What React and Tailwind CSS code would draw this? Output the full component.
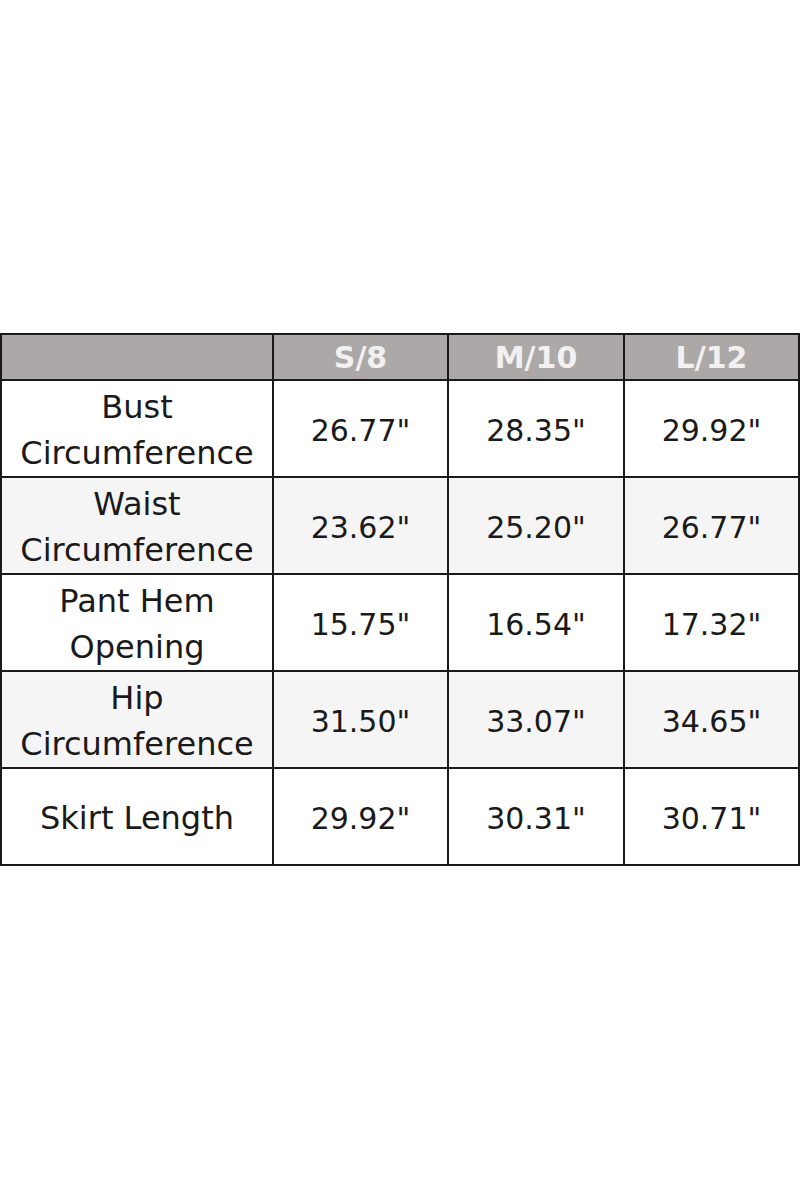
import React from 'react';

const sizes = ["S/8", "M/10", "L/12"];

const rows = [
  { label: ["Bust", "Circumference"], values: ['26.77"', '28.35"', '29.92"'] },
  { label: ["Waist", "Circumference"], values: ['23.62"', '25.20"', '26.77"'] },
  { label: ["Pant Hem", "Opening"], values: ['15.75"', '16.54"', '17.32"'] },
  { label: ["Hip", "Circumference"], values: ['31.50"', '33.07"', '34.65"'] },
  { label: ["Skirt Length"], values: ['29.92"', '30.31"', '30.71"'] },
];

export default function App() {
  return (
    <div className="w-[800px] h-[1200px] bg-white pt-[333px] font-['DejaVu_Sans',sans-serif] text-[#1a1a1a]">
      <div className="grid grid-cols-[270px_173px_174px_173px] gap-[2px] bg-[#1a1a1a] p-[2px] w-[800px]">
        {/* header */}
        <div className="h-[44px] bg-[#aca8a7]" />
        {sizes.map((s) => (
          <div key={s} className="h-[44px] bg-[#aca8a7] flex items-center justify-center text-[30px] font-bold text-[#f2f0f0] leading-none pt-[2px]">
            {s}
          </div>
        ))}

        {rows.map((row, i) => {
          const bg = i % 2 === 1 ? "bg-[#f5f5f5]" : "bg-white";
          return (
            <React.Fragment key={i}>
              <div className={`h-[95px] ${bg} flex flex-col items-center justify-center text-[32px] leading-[46px] pt-[2px]`}>
                {row.label.map((l) => (
                  <span key={l}>{l}</span>
                ))}
              </div>
              {row.values.map((v, j) => (
                <div key={j} className={`h-[95px] ${bg} flex items-center justify-center text-[30px] pt-[3px]`}>
                  {v}
                </div>
              ))}
            </React.Fragment>
          );
        })}
      </div>
    </div>
  );
}
